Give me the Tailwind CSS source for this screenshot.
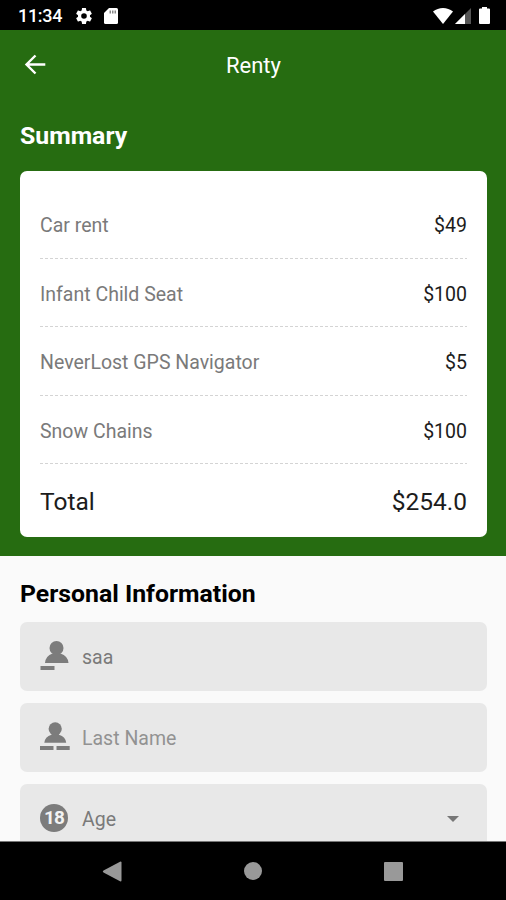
<!DOCTYPE html>
<html lang="en">
<head>
<meta charset="utf-8">
<title>Renty</title>
<script src="https://cdn.jsdelivr.net/npm/@tailwindcss/browser@4"></script>
</head>
<body class="w-[506px] h-[900px] overflow-hidden bg-[#fafafa] font-['Roboto',sans-serif] text-[19.5px] leading-6 flex flex-col">
  <div class="h-[30px] shrink-0 bg-black text-white flex items-center pl-[18px] pr-4">
    <span class="text-[18px] font-medium tracking-[-0.3px] w-[58px] pt-[2px] whitespace-nowrap">11:34</span>
    <svg class="w-4 h-4 mt-px" viewBox="2 2 20 20" fill="currentColor"><path d="M19.43 12.98c.04-.32.07-.64.07-.98s-.03-.66-.07-.98l2.11-1.65c.19-.15.24-.42.12-.64l-2-3.46c-.12-.22-.39-.3-.61-.22l-2.49 1c-.52-.4-1.08-.73-1.69-.98l-.38-2.65A.49.49 0 0 0 14 2h-4c-.25 0-.46.18-.49.42l-.38 2.65c-.61.25-1.17.59-1.69.98l-2.49-1c-.23-.09-.49 0-.61.22l-2 3.46c-.13.22-.07.49.12.64l2.11 1.65c-.04.32-.07.65-.07.98s.03.66.07.98l-2.11 1.65c-.19.15-.24.42-.12.64l2 3.46c.12.22.39.3.61.22l2.49-1c.52.4 1.08.73 1.69.98l.38 2.65c.03.24.24.42.49.42h4c.25 0 .46-.18.49-.42l.38-2.65c.61-.25 1.17-.59 1.69-.98l2.49 1c.23.09.49 0 .61-.22l2-3.46c.12-.22.07-.49-.12-.64zM12 15.5a3.5 3.5 0 1 1 0-7 3.5 3.5 0 0 1 0 7z"/></svg>
    <svg class="w-[14px] h-4 ml-3 mt-px" viewBox="0 0 14 16" fill="currentColor"><path d="M5 0h7.5Q14 0 14 1.500v13q0 1.500-1.500 1.500h-11Q0 16 0 14.500V5z"/><path d="M5.500 2.500h1.500v3H5.500zM8 2.500h1.500v3H8zM10.500 2.500H12v3h-1.500z" fill="#888"/></svg>
    <svg class="w-5 h-4 ml-auto mt-px" viewBox="0 0 20 16" fill="currentColor"><path d="M10 16 0 3.500Q4.500 0 10 0t10 3.500z"/></svg>
    <svg class="w-4 h-4 ml-[2px] mt-px" viewBox="0 0 16 16"><path d="M16 0v16H0z" fill="#555"/><path d="M10 6v10H0z" fill="#fff"/></svg>
    <svg class="w-[11px] h-[17px] ml-2" viewBox="0 0 11 17" fill="currentColor"><path d="M3 0h5v1.500h2q1 0 1 1V16q0 1-1 1H1q-1 0-1-1V2.500q0-1 1-1h2z"/></svg>
  </div>

  <section class="h-[526px] shrink-0 bg-[#266c11] px-5 flex flex-col">
    <header class="h-[70px] grid grid-cols-[30px_1fr_30px] items-center text-white -mr-[1px]">
      <svg class="w-[30px] h-[30px]" viewBox="0 0 30 30" fill="none" stroke="currentColor" stroke-width="2.400"><path d="M25.300 14.500H6.500M15.500 5.500l-9 9 9 9"/></svg>
      <h1 class="text-center text-[22px] pt-[2px]">Renty</h1>
    </header>
    <h2 class="text-white text-[24.800px] font-bold mt-[20px] leading-8 h-[51px]">Summary</h2>
    <div class="w-[467px] h-[366px] bg-white rounded-[7px] px-5 pt-[19px]">
      <div class="h-[68.500px] flex items-center justify-between relative text-[#1c1c1c] pt-1"><span class="text-[#7a7a7a]">Car rent</span><span>$49</span><svg class="absolute left-0 bottom-0 w-full h-px"><path d="M0 .5h427" stroke="#d4d4d4" stroke-dasharray="3 2"/></svg></div>
      <div class="h-[68.500px] flex items-center justify-between relative text-[#1c1c1c] pt-1"><span class="text-[#7a7a7a]">Infant Child Seat</span><span>$100</span><svg class="absolute left-0 bottom-0 w-full h-px"><path d="M0 .5h427" stroke="#d4d4d4" stroke-dasharray="3 2"/></svg></div>
      <div class="h-[68.500px] flex items-center justify-between relative text-[#1c1c1c] pt-1"><span class="text-[#7a7a7a]">NeverLost GPS Navigator</span><span>$5</span><svg class="absolute left-0 bottom-0 w-full h-px"><path d="M0 .5h427" stroke="#d4d4d4" stroke-dasharray="3 2"/></svg></div>
      <div class="h-[68.500px] flex items-center justify-between relative text-[#1c1c1c] pt-1"><span class="text-[#7a7a7a]">Snow Chains</span><span>$100</span><svg class="absolute left-0 bottom-0 w-full h-px"><path d="M0 .5h427" stroke="#d4d4d4" stroke-dasharray="3 2"/></svg></div>
      <div class="h-[73px] flex items-center justify-between text-[24.500px] text-[#1c1c1c] pt-[3px]"><span>Total</span><span>$254.0</span></div>
    </div>
  </section>

  <main class="h-[286px] shrink-0 overflow-hidden px-5 border-b border-[#777]">
    <h2 class="text-[24.800px] font-bold text-black leading-8 pt-[22px] h-[65.500px]">Personal Information</h2>
    <div class="w-[467px] flex flex-col gap-3">
      <div class="h-[69px] rounded-[7px] bg-[#e8e8e8] flex items-center pl-5">
        <svg class="w-[30px] h-[30px] mr-3" viewBox="0 0 30 30" fill="#7c7c7c"><circle cx="16.500" cy="7" r="7"/><path d="M5 22q.5-7 7.500-9.500h8Q28 15 28.500 22zM.500 25h14v4H.500z"/></svg>
        <span class="text-[#7a7a7a] pt-[3px]">saa</span>
      </div>
      <div class="h-[69px] rounded-[7px] bg-[#e8e8e8] flex items-center pl-5">
        <svg class="w-[30px] h-[30px] mr-3" viewBox="0 0 30 30" fill="#7c7c7c"><circle cx="15.200" cy="6.800" r="6.600"/><path d="M4.300 20.800q.5-5.800 7.200-8l.5-2h6.500l.5 2q6.700 2.200 7.200 8zM0 24h13.500v4H0zM16.500 24h13.200v4H16.500z"/></svg>
        <span class="text-[#929292] pt-[3px]">Last Name</span>
      </div>
      <div class="h-[69px] rounded-[7px] bg-[#e8e8e8] flex items-center pl-5 pr-[28px]">
        <span class="w-7 h-7 rounded-full bg-[#7c7c7c] text-[#f2f2f2] text-[19px] font-bold tracking-[-1px] flex items-center justify-center mr-[14px]">18</span>
        <span class="text-[#7a7a7a] pt-[3px]">Age</span>
        <svg class="w-3 h-[6px] ml-auto mt-px" viewBox="0 0 12 6"><path d="M0 0h12L6 6z" fill="#777"/></svg>
      </div>
    </div>
  </main>

  <nav class="h-[58px] shrink-0 bg-black flex items-center pl-[102px] pr-[103px] justify-between text-[#999]">
    <svg class="w-5 h-[21px]" viewBox="0 0 20 21" fill="currentColor"><path d="M18.500.500q1 0 1 1v18q0 1-1 1L1.500 11.500Q0 10.500 1.500 9.500z"/></svg>
    <span class="w-[18px] h-[18px] rounded-full bg-[#999]"></span>
    <span class="w-[19px] h-[19px] rounded-[1px] bg-[#999]"></span>
  </nav>
</body>
</html>
